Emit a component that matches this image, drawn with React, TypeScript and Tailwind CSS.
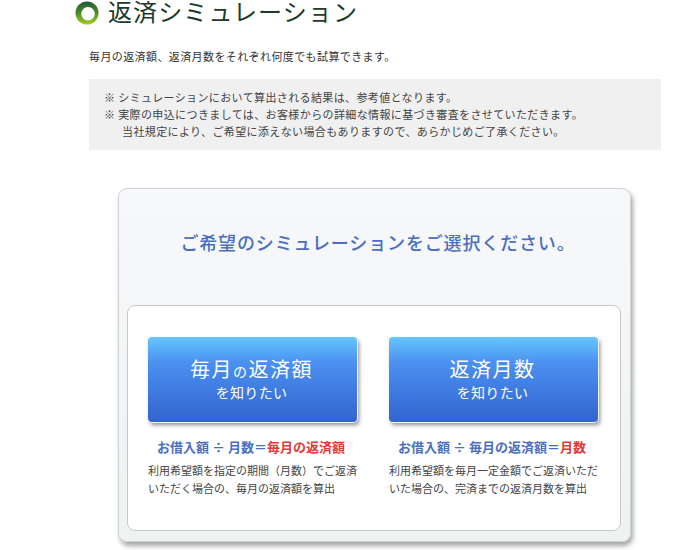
const font = "[font-family:'Noto_Sans_CJK_JP','Noto_Sans',sans-serif]";

function TitleMark() {
  return (
    <svg width="24" height="24" viewBox="0 0 24 24" className="mt-[1px] shrink-0">
      <defs>
        <linearGradient id="mark" x1="0" y1="0" x2="0" y2="1">
          <stop offset="0" stopColor="#1f5a35" />
          <stop offset="0.5" stopColor="#4f8a2c" />
          <stop offset="1" stopColor="#a6cf1e" />
        </linearGradient>
      </defs>
      <circle cx="12" cy="12" r="11.5" fill="url(#mark)" />
      <circle cx="13" cy="12.8" r="6.8" fill="#fff" />
    </svg>
  );
}

type Option = {
  big: React.ReactNode;
  formula: string;
  result: string;
  lines: string[];
};

const options: Option[] = [
  {
    big: (
      <>
        毎月<span className="text-[14px] leading-none">の</span>返済額
      </>
    ),
    formula: "お借入額 ÷ 月数＝",
    result: "毎月の返済額",
    lines: ["利用希望額を指定の期間（月数）でご返済", "いただく場合の、毎月の返済額を算出"],
  },
  {
    big: "返済月数",
    formula: "お借入額 ÷ 毎月の返済額＝",
    result: "月数",
    lines: ["利用希望額を毎月一定金額でご返済いただ", "いた場合の、完済までの返済月数を算出"],
  },
];

function OptionColumn({ option }: { option: Option }) {
  return (
    <div className="w-[209px]">
      <button
        type="button"
        className="flex h-[85px] w-full flex-col items-center rounded-[4px] bg-gradient-to-b from-[#68c6ff] via-[#4b90f0] via-30% to-[#3364cf] pt-[20px] text-white shadow-[0_0_0_1px_#f4f7f9,2px_3px_4px_rgba(0,0,0,0.45)]"
      >
        <span className="ml-[-2px] block h-[24px] text-[20px] leading-[24px] tracking-[1.5px]">{option.big}</span>
        <span className="mt-[2px] ml-[-2px] text-[14px] leading-[18px] tracking-[0.3px]">を知りたい</span>
      </button>
      <p className="mt-[16px] pr-[3px] text-center text-[13px] leading-[18px] font-bold whitespace-nowrap text-[#4a6fc0]">
        {option.formula}
        <span className="text-[#e03a3a]">{option.result}</span>
      </p>
      <div className="mt-[5px] text-[11px] leading-[18px] whitespace-nowrap text-[#444]">
        {option.lines.map((line) => (
          <p key={line}>{line}</p>
        ))}
      </div>
    </div>
  );
}

export default function App() {
  return (
    <div className={`${font} h-[550px] w-[690px] overflow-hidden bg-white text-[#333]`}>
      <div className="flex h-[25px] items-start gap-[9px] pl-[75px]">
        <TitleMark />
        <h1 className="text-[24px] leading-[22px] tracking-[1.1px] whitespace-nowrap text-[#1d3b2a]">
          返済シミュレーション
        </h1>
      </div>

      <p className="mt-[23px] ml-[89px] text-[11px] leading-[17px] tracking-[0.4px]">
        毎月の返済額、返済月数をそれぞれ何度でも試算できます。
      </p>

      <div className="mt-[14px] ml-[89px] h-[71px] w-[572px] bg-[#f0f0f0] pt-[10px] pl-[15px] text-[11px] leading-[17px] tracking-[0.38px] whitespace-nowrap text-[#444]">
        <p>※ シミュレーションにおいて算出される結果は、参考値となります。</p>
        <p>※ 実際の申込につきましては、お客様からの詳細な情報に基づき審査をさせていただきます。</p>
        <p className="pl-[18px]">当社規定により、ご希望に添えない場合もありますので、あらかじめご了承ください。</p>
      </div>

      <div className="mt-[38px] ml-[118px] h-[354px] w-[513px] rounded-[9px] border border-[#cfd2d3] bg-gradient-to-b from-[#f7f8fb] to-[#eef2f3] px-[8px] shadow-[2px_4px_5px_rgba(0,0,0,0.35)]">
        <h2 className="mt-[40px] pl-[7px] text-center text-[18px] leading-[26px] font-medium tracking-[0.85px] text-[#4a6fc0]">
          ご希望のシミュレーションをご選択ください。
        </h2>
        <div className="mt-[50px] flex h-[226px] w-[494px] gap-[32px] rounded-[8px] border border-[#c8c8c8] bg-white px-[20px] pt-[31px]">
          {options.map((option) => (
            <OptionColumn key={option.result} option={option} />
          ))}
        </div>
      </div>
    </div>
  );
}
